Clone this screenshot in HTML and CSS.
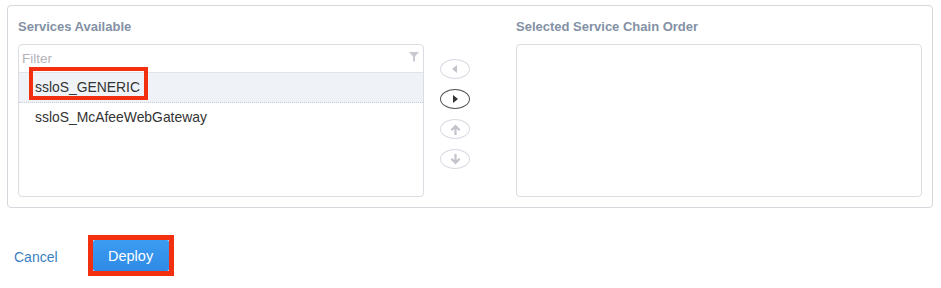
FILE: index.html
```html
<!DOCTYPE html>
<html lang="en">
<head>
    <meta charset="UTF-8">
    <title>Service Chain</title>
    <link rel="stylesheet" href="styles.css">
</head>
<body>
    <!-- Service chain picker -->
    <div class="panel">
        <h3 class="col-title">Services Available</h3>
        <div></div>
        <h3 class="col-title">Selected Service Chain Order</h3>

        <div class="list-box">
            <div class="filter">
                <span class="filter-text">Filter</span>
                <svg class="filter-icon" width="10" height="10" viewBox="0 0 10 10">
                    <path d="M0 0 H10 L6 4.5 V10 L4 9 V4.5 Z" fill="#c9c9cf"/>
                </svg>
            </div>
            <div class="item selected">
                ssloS_GENERIC
                <span class="mark"></span>
            </div>
            <div class="item">ssloS_McAfeeWebGateway</div>
        </div>

        <div class="moves">
            <button class="move">
                <svg width="6" height="8" viewBox="0 0 6 8"><path d="M5 0 V8 L0 4 Z" fill="#c3c3cb"/></svg>
            </button>
            <button class="move active">
                <svg width="6" height="8" viewBox="0 0 6 8"><path d="M1 0 V8 L6 4 Z" fill="#333"/></svg>
            </button>
            <button class="move">
                <svg width="11" height="11" viewBox="0 0 10 10"><path d="M5 0.5 L9.5 5 L8 6.4 L6 4.4 V10 H4 V4.4 L2 6.4 L0.5 5 Z" fill="#c3c3cb"/></svg>
            </button>
            <button class="move">
                <svg width="11" height="11" viewBox="0 0 10 10"><path d="M5 9.5 L9.5 5 L8 3.6 L6 5.6 V0 H4 V5.6 L2 3.6 L0.5 5 Z" fill="#c3c3cb"/></svg>
            </button>
        </div>

        <div class="list-box"></div>
    </div>

    <!-- Footer actions -->
    <div class="footer">
        <a class="cancel" href="#">Cancel</a>
        <span class="deploy-mark">
            <button class="deploy">Deploy</button>
        </span>
    </div>
</body>
</html>
```

FILE: styles.css
```css
body {
    margin: 0;
    font-family: "Liberation Sans", Arial, sans-serif;
    background: #fff;
    color: #333;
}

.panel {
    margin: 5px 8px 0 7px;
    border: 1px solid #d6d6dd;
    border-radius: 4px;
    padding: 13px 10px 10px 10px;
    display: grid;
    grid-template-columns: 406px 92px 406px;
    grid-template-rows: auto 153px;
}

.col-title {
    margin: 0 0 10px 0;
    font-size: 13px;
    line-height: 15px;
    font-weight: bold;
    color: #8391a5;
}

.list-box {
    border: 1px solid #dcdce2;
    border-radius: 4px;
    background: #fff;
    overflow: hidden;
}

.filter {
    height: 27px;
    border-bottom: 1px solid #e3e3e8;
    display: flex;
    align-items: center;
    justify-content: space-between;
    padding: 0 4px 0 3px;
}

.filter-text {
    font-size: 13.5px;
    color: #b3b3b8;
}

.filter-icon {
    margin-top: -4px;
}

.item {
    position: relative;
    height: 29px;
    line-height: 29px;
    padding-left: 16px;
    font-size: 13.9px;
    color: #333;
}

.item.selected {
    background: #eff3f8;
    border-bottom: 1px dotted #c9ccd4;
}

.mark {
    position: absolute;
    left: 10px;
    top: -6px;
    width: 111px;
    height: 25px;
    border: 4px solid #f2300f;
}

.moves {
    display: flex;
    flex-direction: column;
    align-items: flex-start;
    gap: 10px;
    padding: 15px 0 0 16px;
}

.move {
    width: 30px;
    height: 20px;
    padding: 0;
    border: 1px solid #dadae2;
    border-radius: 50%;
    background: #fff;
    display: flex;
    align-items: center;
    justify-content: center;
}

.move.active {
    border-color: #555;
}

.footer {
    display: flex;
    align-items: center;
    gap: 30px;
    margin-top: 27px;
    padding-left: 14px;
}

.cancel {
    font-size: 14px;
    color: #3b7fc2;
    text-decoration: none;
    margin-top: 3px;
}

.deploy-mark {
    display: inline-flex;
    border: 5px solid #f2300f;
}

.deploy {
    width: 76px;
    height: 31px;
    border: none;
    border-radius: 2px;
    background: linear-gradient(#3c9cf2, #2f8ae4);
    color: #fff;
    font-family: "Liberation Sans", Arial, sans-serif;
    font-size: 14.5px;
}
```
